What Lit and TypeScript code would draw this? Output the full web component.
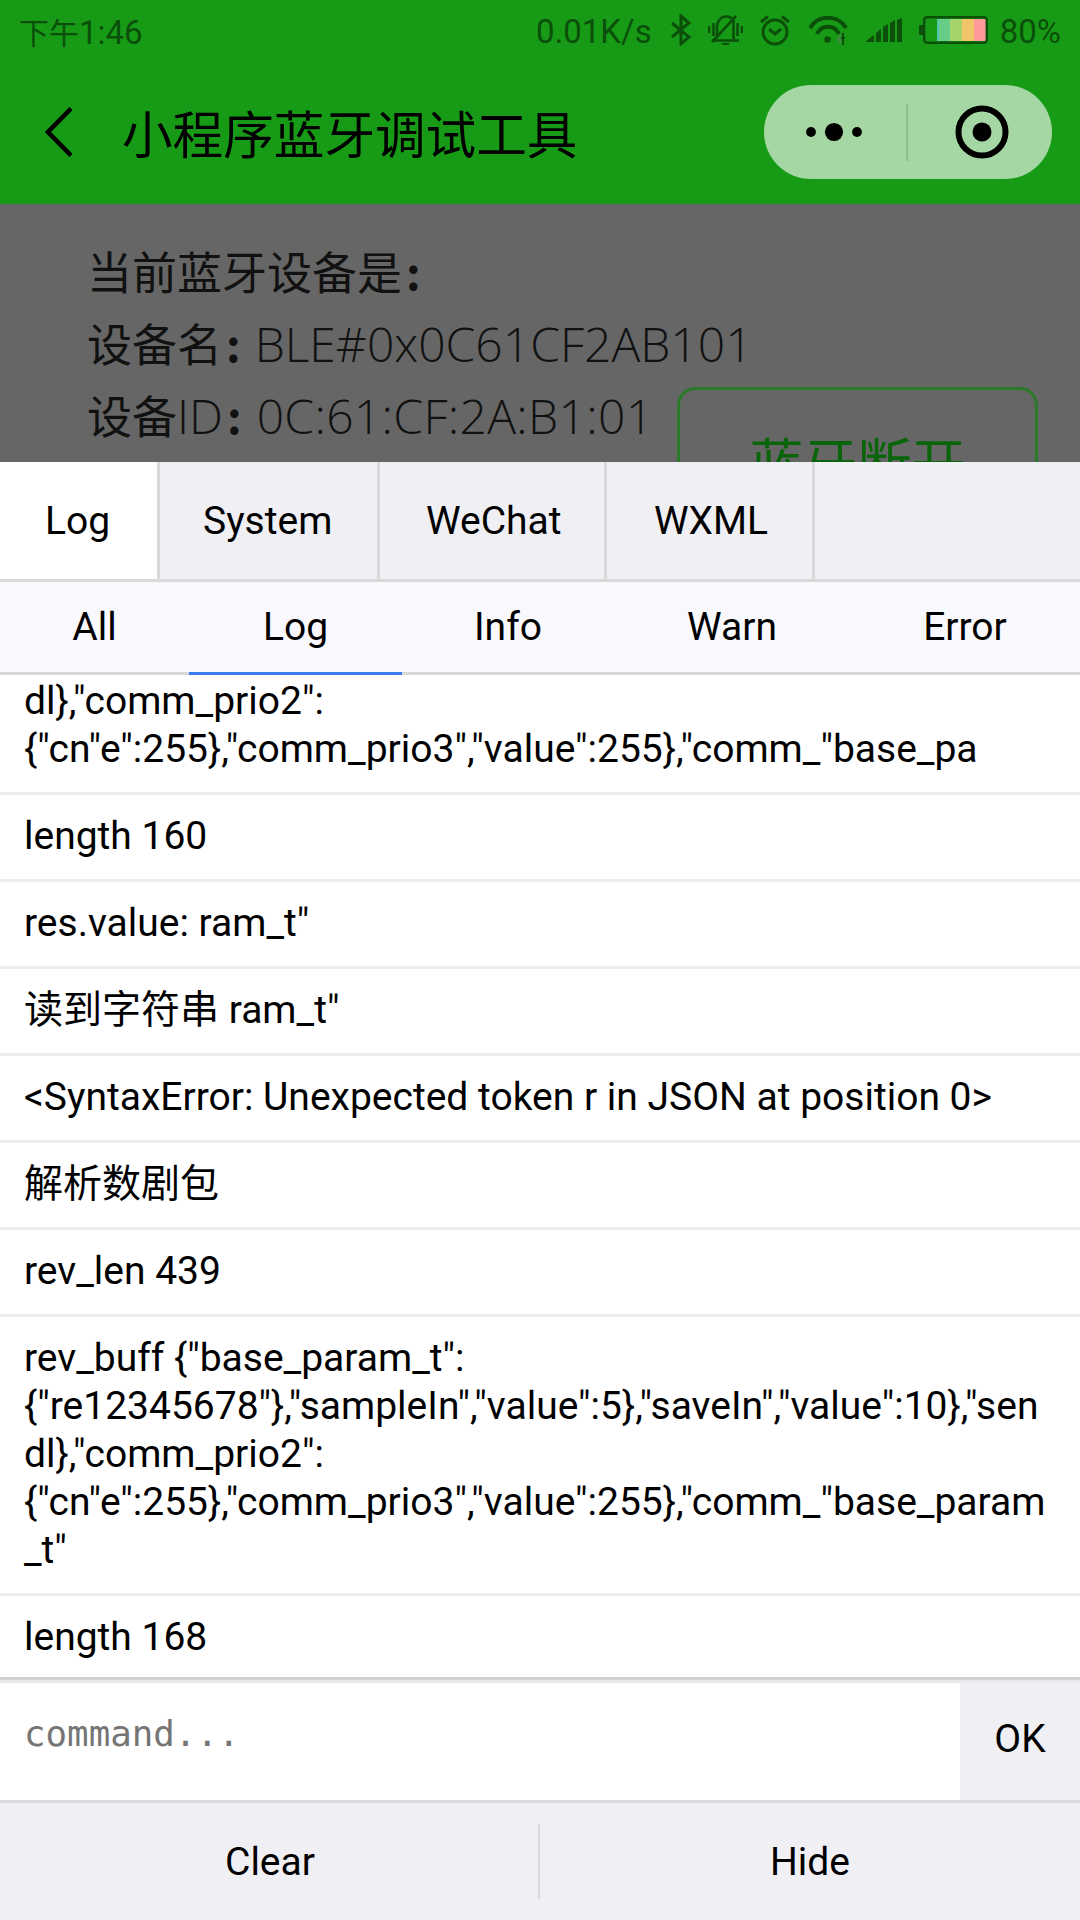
import { LitElement, html, css } from "lit";
import { customElement } from "lit/decorators.js";

const ROWS = [
  `rev_buff {"base_param_t":{"re12345678"},"sampleIn","value":5},"saveIn","value":10},"sendl},"comm_prio2":{"cn"e":255},"comm_prio3","value":255},"comm_"base_pa`,
  `length 160`,
  `res.value: ram_t"`,
  `读到字符串 ram_t"`,
  `<SyntaxError: Unexpected token r in JSON at position 0>`,
  `解析数剧包`,
  `rev_len 439`,
  `rev_buff {"base_param_t":{"re12345678"},"sampleIn","value":5},"saveIn","value":10},"sendl},"comm_prio2":{"cn"e":255},"comm_prio3","value":255},"comm_"base_param_t"`,
  `length 168`,
];

@customElement("app-root")
export class AppRoot extends LitElement {
  static styles = css`
    :host {
      display: flex;
      flex-direction: column;
      width: 1080px;
      height: 1920px;
      overflow: hidden;
      background: #fff;
      font-family: Roboto, "Noto Sans CJK SC", sans-serif;
      color: #000;
    }
    .header { background: #179b16; height: 204px; flex: none; display: flex; flex-direction: column; }
    .status { height: 62px; display: flex; align-items: center; padding: 0 19px 2px 19px; box-sizing: border-box; color: #0b4f0b; font-size: 33px; }
    .status span { padding-top: 2px; }
    .status .time { margin-right: auto; }
    .status .cn { font-size: 30px; padding-top: 0; }
    .status svg { display: block; flex: none; }
    .status .speed { margin-right: 19px; }
    .bt { margin-right: 17px; } .bell { margin-right: 16px; } .alarm { margin-right: 18px; }
    .wifi { margin-right: 16px; } .signal { margin-right: 17px; } .battery { margin-right: 12px; }
    .nav { flex: 1; display: flex; align-items: center; padding: 0 28px 2px 45px; }
    .nav svg { display: block; flex: none; }
    .title { margin-left: 50px; font-size: 50.6px; font-family: "Noto Sans CJK SC", sans-serif; }
    .pill { margin-left: auto; width: 288px; height: 94px; border-radius: 47px; background: #a4d7a4; display: flex; align-items: center; }
    .half { flex: 1; display: flex; justify-content: center; align-items: center; }
    .half.left { padding-right: 2px; }
    .half.right { padding-left: 4px; }
    .divider { width: 2px; height: 57px; background: #8cbd8c; flex: none; }
    .page { height: 258px; flex: none; overflow: hidden; background: #666; padding: 31px 0 0 87px; box-sizing: border-box; font-size: 45px; font-family: "Noto Sans CJK SC", sans-serif; color: #111; }
    .line { height: 72px; line-height: 72px; white-space: nowrap; }
    .line.withbtn { display: flex; align-items: flex-start; padding-right: 42px; }
    .latin { font-family: "Open Sans", sans-serif; font-weight: 300; font-size: 48px; }
    .latin.mac { letter-spacing: 0.3px; }
    .colon { font-weight: 700; margin: 0 14px 0 4px; }
    .colon.tight { margin-right: 15px; }
    .btn { margin-left: auto; margin-top: 8px; width: 361px; height: 147px; box-sizing: border-box; flex: none; border: 3px solid #2b7a2b; border-radius: 18px; box-shadow: inset 0 0 0 1px #5e6b5e; display: flex; align-items: center; justify-content: center; color: #0a650a; font-size: 54px; line-height: 72px; }
    .panel { flex: 1; min-height: 0; display: flex; flex-direction: column; font-size: 39px; }
    .tabs { height: 120px; flex: none; box-sizing: border-box; display: grid; grid-template-columns: 160px 220px 227px 208px 1fr; background: #efeff4; border-bottom: 3px solid #d9d9d9; }
    .tab { display: flex; align-items: center; padding-left: 43px; box-sizing: border-box; border-right: 3px solid #d9d9d9; }
    .tab.w { padding-left: 46px; }
    .tab.last { padding-left: 47px; }
    .tab.on { background: #fff; padding-left: 45px; }
    .subs { height: 93px; flex: none; box-sizing: border-box; display: grid; grid-template-columns: 189px 213px 212px 236px 230px; background: #f9f9fd; border-bottom: 3px solid #d9d9d9; }
    .sub { display: flex; align-items: center; justify-content: center; }
    .sub.on { box-shadow: 0 3px 0 #3b7df0; }
    .list { flex: 1; min-height: 0; overflow: hidden; display: flex; flex-direction: column; justify-content: flex-end; }
    .row { flex: none; padding: 17px 24px 19px; line-height: 48px; border-bottom: 3px solid #eee; overflow-wrap: anywhere; }
    .row:last-child { border-bottom: none; margin-bottom: -3px; }
    .cmd { height: 126px; flex: none; box-sizing: border-box; display: flex; padding-top: 3px; background: #e8e8e8; border-top: 3px solid #d0d0d0; border-bottom: 3px solid #d9d9d9; }
    .input { flex: 1; padding: 0 0 16px 24px; display: flex; align-items: center; background: #fff; font-family: "DejaVu Sans Mono", monospace; font-size: 35.8px; color: #757575; }
    .ok { width: 120px; background: #efeff4; padding-bottom: 6px; box-sizing: border-box; display: flex; align-items: center; justify-content: center; }
    .foot { height: 117px; flex: none; background: #efeff4; display: grid; grid-template-columns: 538px 2px 1fr; align-items: center; }
    .act { text-align: center; }
    .act.first { padding-left: 2px; }
    .sep { height: 75px; background: #d9d9d9; }
  `;

  render() {
    return html`
      <div class="header">
        <div class="status">
          <span class="time"><span class="cn">下午</span>1:46</span>
          <span class="speed">0.01K/s</span>
          <svg class="bt" width="20" height="32" viewBox="0 0 20 32" fill="none" stroke="#0b4f0b" stroke-width="3"><polyline points="1,9 18,23 10,30 10,2 18,9 1,23"/></svg>
          <svg class="bell" width="35" height="31" viewBox="0 0 35 31" fill="none" stroke="#0b4f0b" stroke-width="2.6">
            <path d="M9 23V12C9 6 13 1.5 18 1.5C21 1.5 24 3 25.5 6V24"/><path d="M28 1L4 27"/><path d="M4 25.5H31"/><path d="M1 11V18M5.5 8V21M29.5 8V21M34 11V18"/>
            <path d="M13 28H22C21 31 14 31 13 28Z" fill="#0b4f0b" stroke="none"/>
          </svg>
          <svg class="alarm" width="32" height="31" viewBox="0 0 32 31" fill="none" stroke="#0b4f0b" stroke-width="3"><circle cx="16" cy="17" r="12"/><path d="M2 7L9 1.5M23 1.5L30 7"/><polyline points="10,14 16,19 22,14"/></svg>
          <svg class="wifi" width="40" height="29" viewBox="0 0 40 29" fill="none" stroke="#0b4f0b" stroke-width="4">
            <path d="M1 12A21 21 0 0 1 37 12"/><path d="M8 18A12 12 0 0 1 30 18"/><circle cx="18.5" cy="23.5" r="3.2" fill="#0b4f0b" stroke="none"/>
            <path d="M27 23L32 17V29Z" fill="#3f8a3f" stroke="none"/><path d="M34 17V29M32 22L36 22" stroke="#0b4f0b" stroke-width="2"/>
          </svg>
          <svg class="signal" width="37" height="25" viewBox="0 0 37 25" fill="#0b4f0b"><polygon points="0,24 9,17 9,24"/><polygon points="11,15 16,11 16,24 11,24"/><polygon points="18,9 23,6 23,24 18,24"/><polygon points="25,5 30,2 30,24 25,24"/><polygon points="32,2 37,0 37,24 32,24"/></svg>
          <svg class="battery" width="69" height="28" viewBox="0 0 69 28" fill="none">
            <rect x="18" y="3" width="13" height="22" fill="#66cc88"/><rect x="18" y="3" width="2" height="22" fill="#55c4b0"/><rect x="31" y="3" width="12" height="22" fill="#a6d46c"/><rect x="43" y="3" width="12" height="22" fill="#f3c56a"/><rect x="55" y="3" width="12" height="22" fill="#ff9a9a"/>
            <rect x="5.2" y="1.2" width="62.6" height="25.6" rx="3" stroke="#0b4f0b" stroke-width="2.4"/><rect x="0" y="9" width="4.5" height="10" rx="1" fill="#0b4f0b"/>
          </svg>
          <span>80%</span>
        </div>
        <div class="nav">
          <svg width="27" height="50" viewBox="0 0 27 50" fill="none" stroke="#000" stroke-width="4.5"><polyline points="26,1.5 3,25 26,48.5"/></svg>
          <div class="title">小程序蓝牙调试工具</div>
          <div class="pill">
            <div class="half left"><svg width="60" height="20" viewBox="0 0 60 20" fill="#000"><circle cx="7" cy="10" r="4.9"/><circle cx="30" cy="10" r="9.1"/><circle cx="53" cy="10" r="4.9"/></svg></div>
            <div class="divider"></div>
            <div class="half right"><svg width="54" height="54" viewBox="0 0 54 54" fill="none"><circle cx="27" cy="27" r="23.5" stroke="#000" stroke-width="6"/><circle cx="27" cy="27" r="9.5" fill="#000"/></svg></div>
          </div>
        </div>
      </div>
      <div class="page">
        <div class="line">当前蓝牙设备是<span class="colon">:</span></div>
        <div class="line">设备名<span class="colon">:</span><span class="latin">BLE#0x0C61CF2AB101</span></div>
        <div class="line withbtn"><span>设备<span class="latin">ID</span><span class="colon tight">:</span><span class="latin mac">0C:61:CF:2A:B1:01</span></span><div class="btn">蓝牙断开</div></div>
      </div>
      <div class="panel">
        <div class="tabs">
          <div class="tab on">Log</div><div class="tab">System</div><div class="tab w">WeChat</div><div class="tab last">WXML</div>
        </div>
        <div class="subs">
          <div class="sub">All</div><div class="sub on">Log</div><div class="sub">Info</div><div class="sub">Warn</div><div class="sub">Error</div>
        </div>
        <div class="list">${ROWS.map((r) => html`<div class="row">${r}</div>`)}</div>
        <div class="cmd"><div class="input">command...</div><div class="ok">OK</div></div>
        <div class="foot"><div class="act first">Clear</div><div class="sep"></div><div class="act">Hide</div></div>
      </div>
    `;
  }
}
